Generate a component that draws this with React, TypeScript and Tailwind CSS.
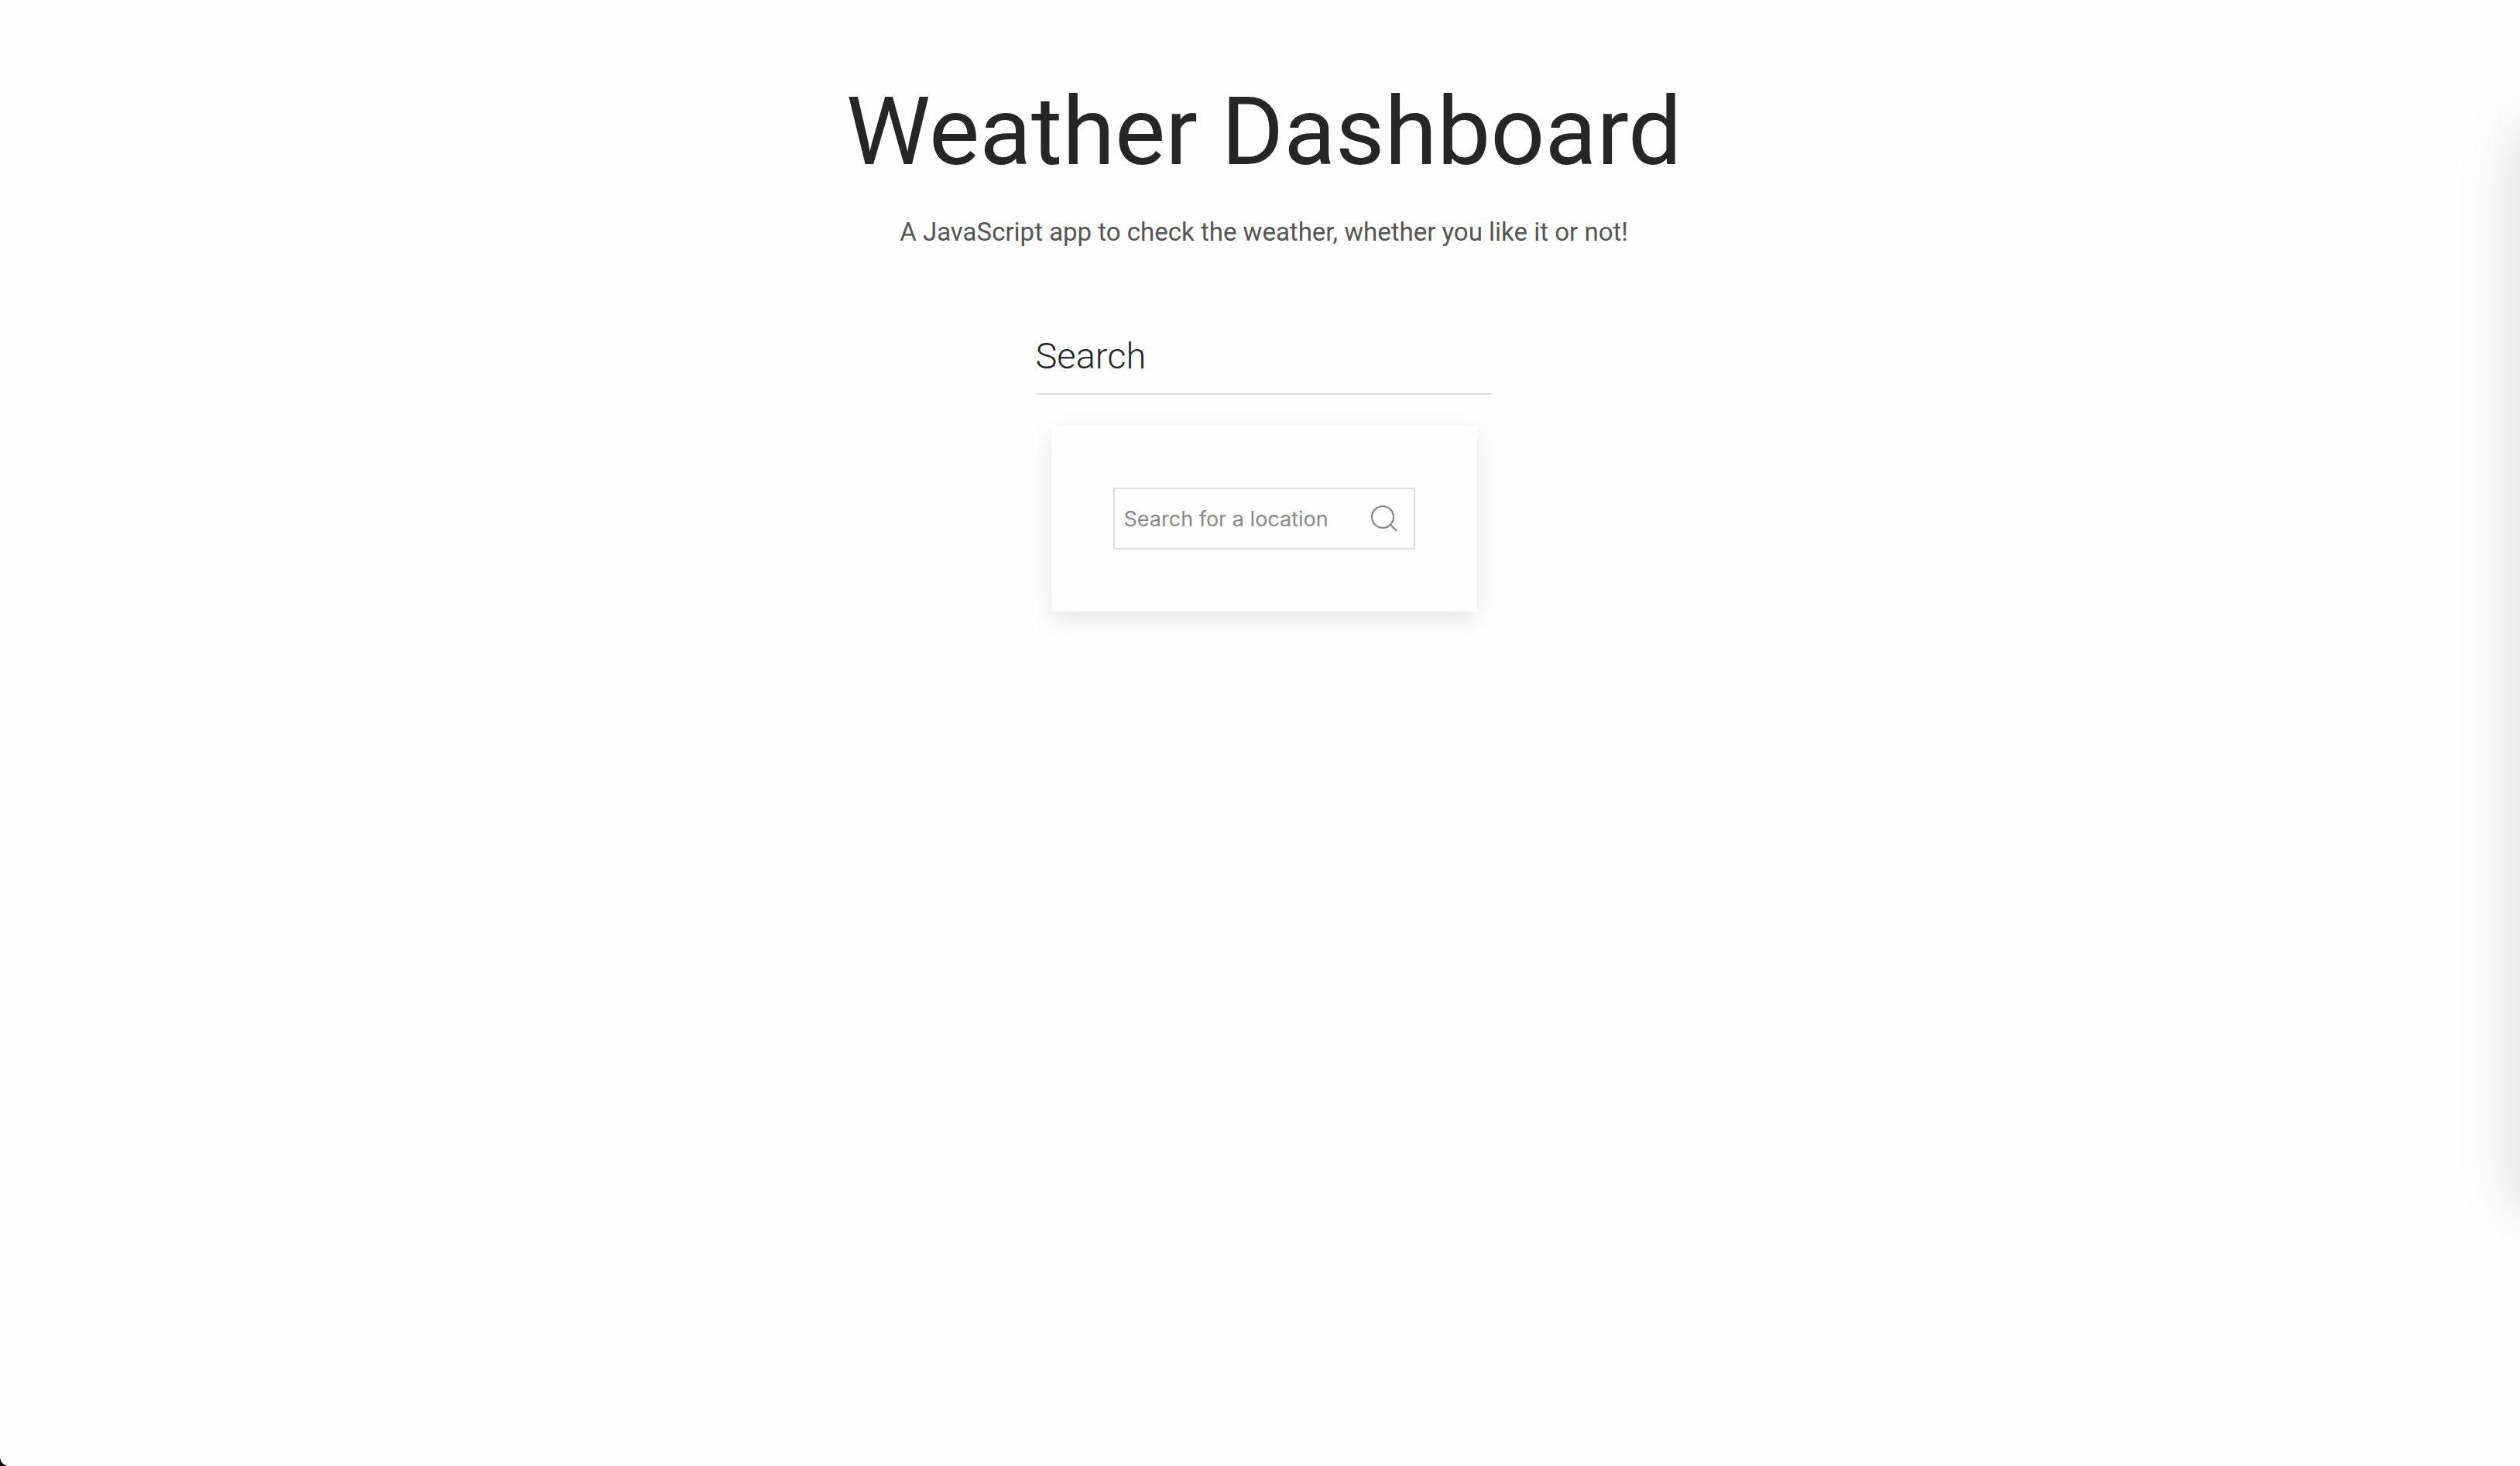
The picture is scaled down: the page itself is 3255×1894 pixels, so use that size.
export default function App() {
  return (
    <div className="relative flex min-h-screen flex-col items-center overflow-hidden bg-[#fefefe] pt-[82px] pr-5 pl-[30px] font-[Inter,sans-serif] text-[#262626]">
      <header className="text-center">
        <h1 className="font-[Roboto,sans-serif] text-[123px] leading-[176px]">Weather Dashboard</h1>
        <p className="mt-[18px] font-[Roboto,sans-serif] text-[33px] leading-[48px] text-[#555555]">
          A JavaScript app to check the weather, whether you like it or not!
        </p>
      </header>

      <main className="mt-[102px] flex w-[590px] max-w-full flex-col">
        <h2 className="border-b-2 border-[#dedede] pb-[14px] font-[Roboto,sans-serif] text-[47px] leading-[68px] font-light">
          Search
        </h2>
        <section className="mx-5 mt-10 bg-[#fefefe] p-20 shadow-[0_10px_30px_rgba(0,0,0,0.1)]">
          <form
            role="search"
            onSubmit={(event) => event.preventDefault()}
            className="flex h-20 items-center border-2 border-[#dedede] pr-[18px] pl-3"
          >
            <input
              type="search"
              aria-label="Search for a location"
              placeholder="Search for a location"
              className="h-full min-w-0 flex-1 bg-transparent text-[27px] outline-none placeholder:text-[#888888]"
            />
            <button type="submit" aria-label="Search" className="shrink-0 text-[#888888]">
              <svg width="40" height="40" viewBox="0 0 20 20" fill="none" stroke="currentColor" strokeWidth="1.1">
                <circle cx="9" cy="9" r="7" />
                <path d="M14,14 L18,18 L14,14 Z" />
              </svg>
            </button>
          </form>
        </section>
      </main>

      <div
        aria-hidden="true"
        className="absolute top-[170px] left-full h-[1390px] w-96 shadow-[0_0_76px_rgba(0,0,0,0.16)]"
      />
      <svg aria-hidden="true" className="absolute bottom-0 left-0" width="9" height="11" viewBox="0 0 9 11">
        <path d="M0 0 Q1 8 9 11 H0 Z" fill="#110800" />
      </svg>
    </div>
  );
}
